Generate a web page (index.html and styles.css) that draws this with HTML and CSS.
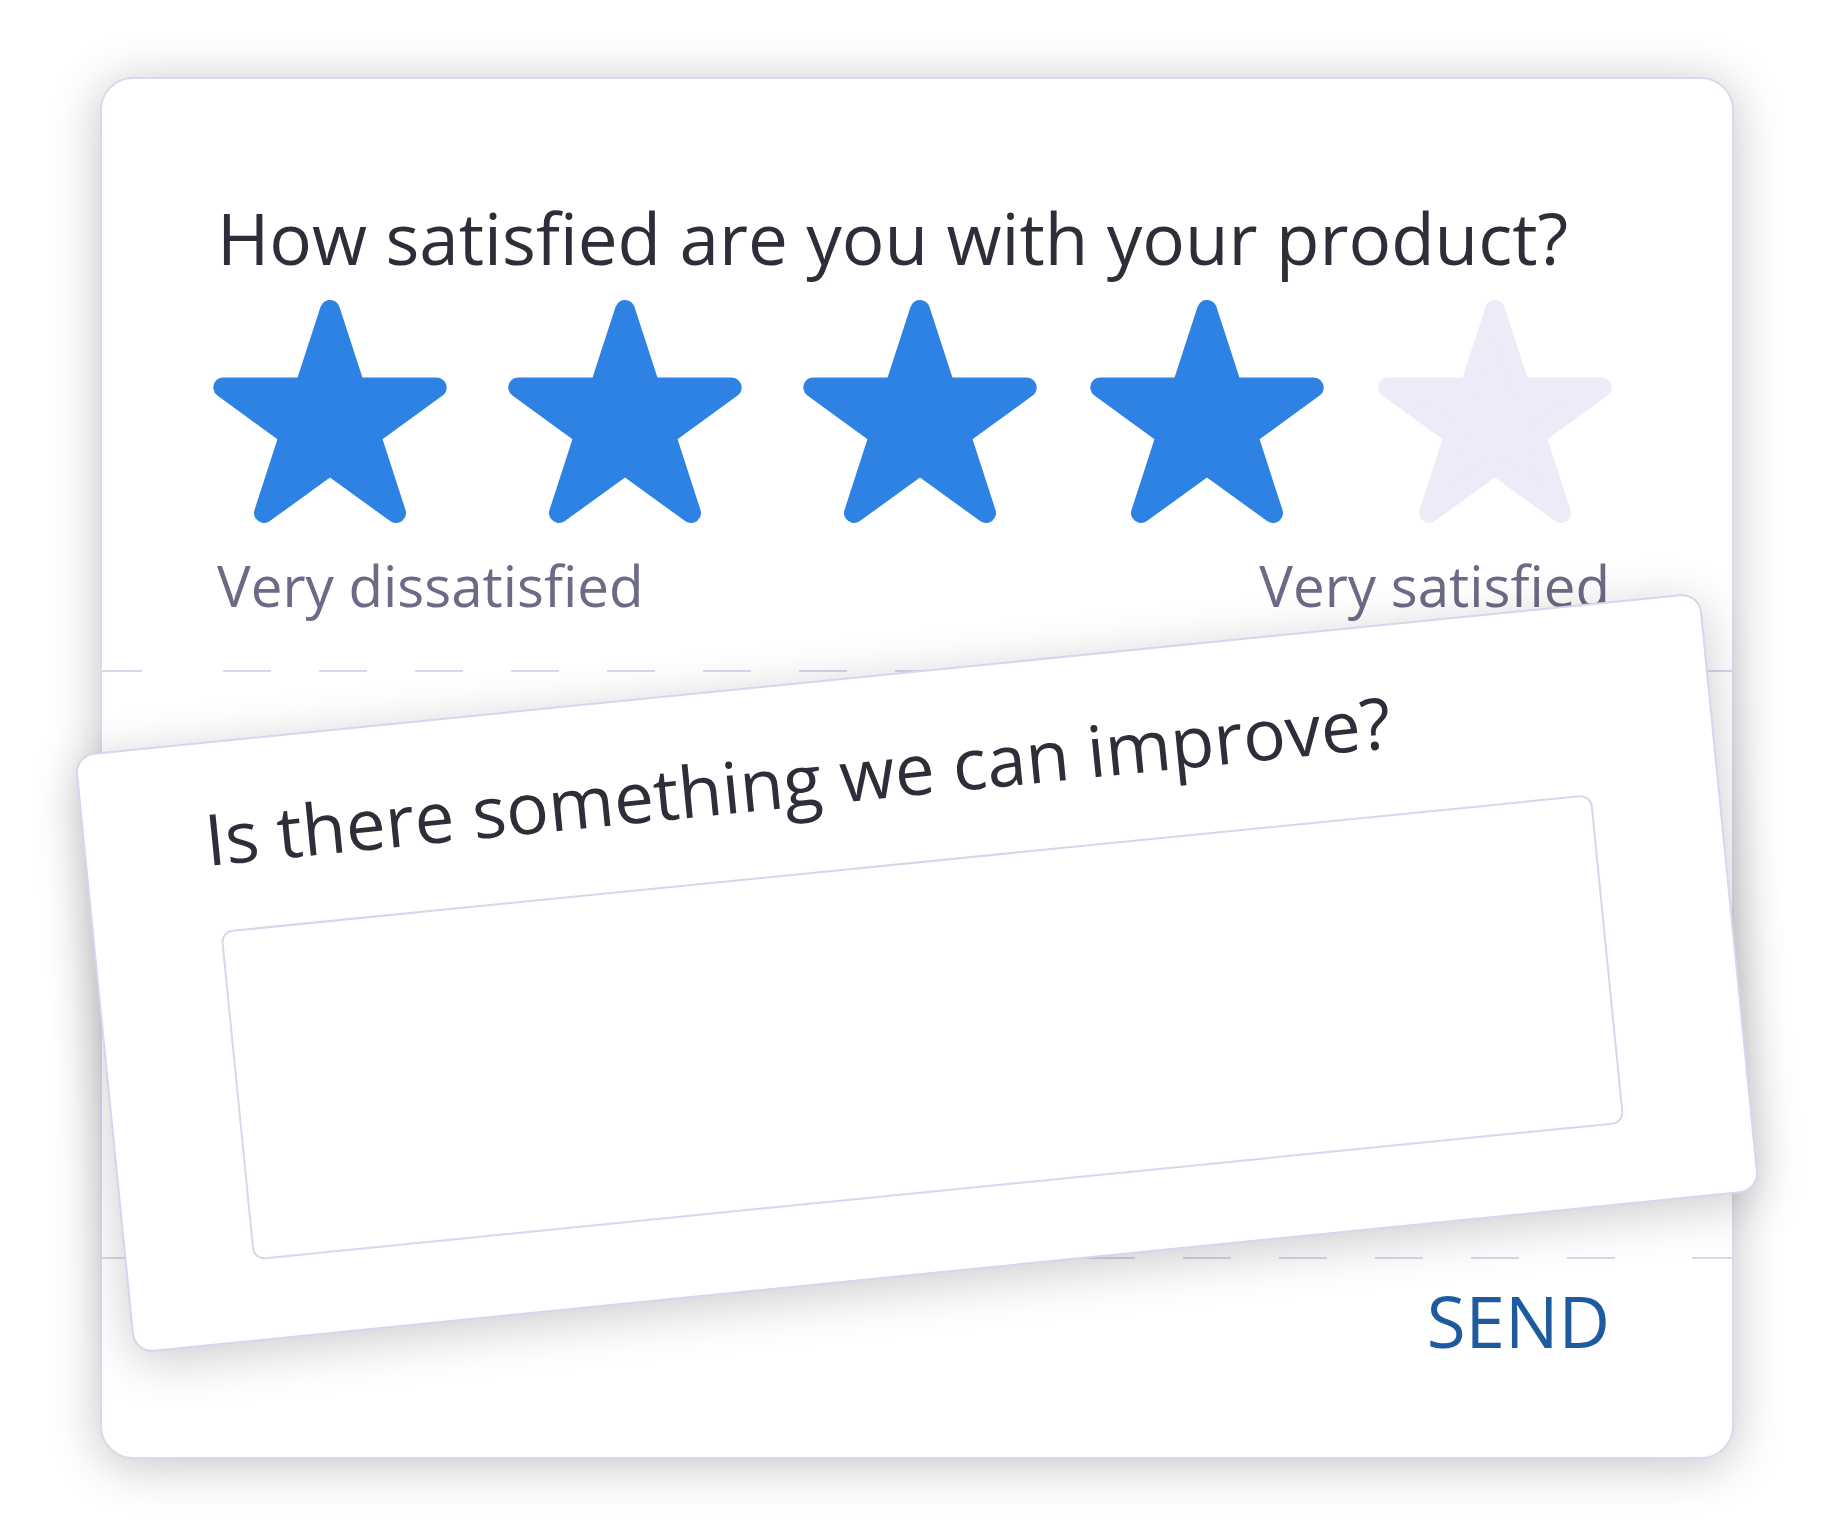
FILE: index.html
```html
<!DOCTYPE html>
<html lang="en">
<head>
    <meta charset="UTF-8">
    <meta name="viewport" content="width=device-width, initial-scale=1.0">
    <title>Product feedback</title>
    <link rel="stylesheet" href="styles.css">
</head>
<body>
    <div class="page">
        <section class="survey">
            <div class="rating">
                <h1 class="question">How satisfied are you with your product?</h1>
                <div class="stars">
                    <svg class="star on" viewBox="0 0 234 224"><polygon points="117,10 142.2,87.5 223.7,87.5 157.8,135.4 183,213 117,165.1 51,213 76.2,135.4 10.3,87.5 91.8,87.5"/></svg>
                    <svg class="star on" viewBox="0 0 234 224"><polygon points="117,10 142.2,87.5 223.7,87.5 157.8,135.4 183,213 117,165.1 51,213 76.2,135.4 10.3,87.5 91.8,87.5"/></svg>
                    <svg class="star on" viewBox="0 0 234 224"><polygon points="117,10 142.2,87.5 223.7,87.5 157.8,135.4 183,213 117,165.1 51,213 76.2,135.4 10.3,87.5 91.8,87.5"/></svg>
                    <svg class="star on" viewBox="0 0 234 224"><polygon points="117,10 142.2,87.5 223.7,87.5 157.8,135.4 183,213 117,165.1 51,213 76.2,135.4 10.3,87.5 91.8,87.5"/></svg>
                    <svg class="star" viewBox="0 0 234 224"><polygon points="117,10 142.2,87.5 223.7,87.5 157.8,135.4 183,213 117,165.1 51,213 76.2,135.4 10.3,87.5 91.8,87.5"/></svg>
                </div>
                <div class="scale">
                    <span>Very dissatisfied</span>
                    <span>Very satisfied</span>
                </div>
            </div>

            <div class="divider"></div>

            <div class="improve">
                <h2 class="improve-title">Is there something we can improve?</h2>
                <textarea class="answer"></textarea>
            </div>

            <div class="divider"></div>

            <div class="actions">
                <span class="send">SEND</span>
            </div>
        </section><!-- .survey END -->
    </div>
</body>
</html>
```

FILE: styles.css
```css
* {
    margin: 0;
    padding: 0;
    box-sizing: border-box;
}
body {
    width: 1836px;
    height: 1533px;
    background-color: #fff;
    font-family: "Open Sans", "Noto Sans", sans-serif;
    overflow: hidden;
}
.page {
    padding: 77px 0 0 100px;
}

/* 바깥 카드 */
.survey {
    width: 1634px;
    background-color: #fff;
    border: 2px solid #d9d9ee;
    border-radius: 33px;
    box-shadow: 0 6px 50px rgba(0, 0, 0, 0.24);
}

.rating {
    padding: 110px 122px 46px 115px;
}
.question {
    font-size: 71px;
    font-weight: 400;
    color: #2e2e3a;
    line-height: normal;
    white-space: nowrap;
}
.stars {
    display: flex;
    margin: 14px 0 0 -4px;
}
.star {
    width: 234px;
    height: 224px;
    display: block;
    flex-shrink: 0;
}
.star + .star {
    margin-left: 61px;
}
/* 뒤쪽 별은 간격이 조금 좁음 */
.star:nth-child(4) {
    margin-left: 53px;
}
.star:nth-child(5) {
    margin-left: 54px;
}
.star polygon {
    fill: #ececf8;
    stroke: #ececf8;
    stroke-width: 20;
    stroke-linejoin: round;
}
.star.on polygon {
    fill: #2d82e4;
    stroke: #2d82e4;
}
.scale {
    display: flex;
    justify-content: space-between;
    margin-top: 23px;
    font-size: 56.5px;
    color: #6b6b86;
}

/* 점선 구분선 : 양 끝은 짧게 */
.divider {
    height: 2px;
    background:
        linear-gradient(#d8d8ec, #d8d8ec) left top / 40px 2px no-repeat,
        linear-gradient(#d8d8ec, #d8d8ec) right top / 40px 2px no-repeat,
        repeating-linear-gradient(90deg, #d8d8ec 0 48px, transparent 48px 96px) 121px 0 / 1392px 2px no-repeat;
}

/* 기울어진 카드 - 가운데 기준 회전 */
.improve {
    height: 602px;
    margin: 0 -2px -17px;
    padding: 46px 126px 0;
    background-color: #fff;
    border: 2px solid #d6d6ec;
    border-radius: 20px;
    box-shadow: 0 10px 50px rgba(0, 0, 0, 0.2);
    transform: rotate(-5.7deg);
}
.improve-title {
    font-size: 71px;
    font-weight: 400;
    color: #2e2e3a;
    line-height: normal;
    margin-left: -6px;
    white-space: nowrap;
}
.answer {
    display: block;
    width: 100%;
    height: 331px;
    margin-top: 45px;
    border: 2px solid #d6d6ec;
    border-radius: 12px;
    background-color: #fff;
    resize: none;
    outline: none;
}

.actions {
    padding: 13px 122px 88px 0;
    text-align: right;
}
.send {
    font-size: 71px;
    color: #1e5aa0;
}
```
